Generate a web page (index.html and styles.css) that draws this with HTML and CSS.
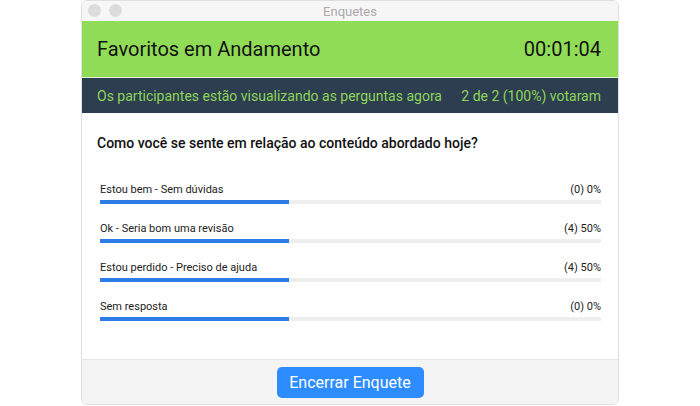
FILE: index.html
```html
<!DOCTYPE html>
<html lang="pt-BR">
<head>
    <meta charset="UTF-8">
    <meta name="viewport" content="width=device-width, initial-scale=1.0">
    <title>Enquetes</title>
    <link rel="stylesheet" href="styles.css">
</head>
<body>
    <div class="window">
        <div class="titlebar">
            <div class="dots">
                <span class="dot"></span>
                <span class="dot"></span>
            </div>
            <div class="wintitle">Enquetes</div>
        </div>
        <div class="header">
            <h1>Favoritos em Andamento</h1>
            <span class="timer">00:01:04</span>
        </div>
        <div class="status">
            <span>Os participantes estão visualizando as perguntas agora</span>
            <span>2 de 2 (100%) votaram</span>
        </div>
        <div class="content">
            <h2>Como você se sente em relação ao conteúdo abordado hoje?</h2>
            <div class="option">
                <div class="option-row"><span>Estou bem - Sem dúvidas</span><span>(0) 0%</span></div>
                <div class="track"><div class="fill" style="width: 37.7%"></div></div>
            </div>
            <div class="option">
                <div class="option-row"><span>Ok - Seria bom uma revisão</span><span>(4) 50%</span></div>
                <div class="track"><div class="fill" style="width: 37.7%"></div></div>
            </div>
            <div class="option">
                <div class="option-row"><span>Estou perdido - Preciso de ajuda</span><span>(4) 50%</span></div>
                <div class="track"><div class="fill" style="width: 37.7%"></div></div>
            </div>
            <div class="option">
                <div class="option-row"><span>Sem resposta</span><span>(0) 0%</span></div>
                <div class="track"><div class="fill" style="width: 37.7%"></div></div>
            </div>
        </div>
        <div class="footer">
            <button type="button">Encerrar Enquete</button>
        </div>
    </div>
</body>
</html>
```

FILE: styles.css
```css
body { margin: 0; background: #fff; font-family: Roboto, "Liberation Sans", sans-serif; }
.window { width: 536px; margin: 0 auto; border: 1px solid #e0e0e0; border-radius: 6px; overflow: hidden; background: #fff; box-sizing: content-box; height: 403px; display: flex; flex-direction: column; }
.titlebar { height: 20px; background: #f6f6f6; display: flex; align-items: center; justify-content: center; position: relative; }
.dots { position: absolute; left: 6px; top: 3px; display: flex; gap: 8px; }
.dot { width: 13px; height: 13px; border-radius: 50%; background: #dcdcdc; }
.wintitle { font-size: 13px; color: #aaa; }
.header { height: 56px; background: #91dc57; display: flex; align-items: center; justify-content: space-between; padding: 0 17px 0 15px; border-bottom: 1px solid #e6f2dc; }
.header h1 { margin: 0; font-size: 20px; font-weight: 400; color: #111; }
.timer { font-size: 20px; color: #111; }
.status { height: 35px; background: #2c3e4f; color: #8fd45a; font-size: 14px; display: flex; align-items: center; justify-content: space-between; padding: 0 17px 0 15px; }
.content { flex: 1; padding: 20px 17px 0 18px; }
.content h2 { margin: 0 0 29px -3px; font-size: 14px; font-weight: 500; color: #111; line-height: 20px; }
.option { margin-bottom: 17px; }
.option-row { display: flex; justify-content: space-between; font-size: 11px; color: #222; line-height: 16px; margin-bottom: 2px; }
.track { height: 4px; background: #eee; }
.fill { height: 4px; background: #2d7be5; }
.footer { height: 44px; background: #f4f4f4; border-top: 1px solid #e4e4e4; display: flex; align-items: center; justify-content: center; }
.footer button { width: 147px; height: 31px; border: none; border-radius: 5px; background: #2d8cff; color: #fff; font-family: inherit; font-size: 16px; padding: 0; }
```
